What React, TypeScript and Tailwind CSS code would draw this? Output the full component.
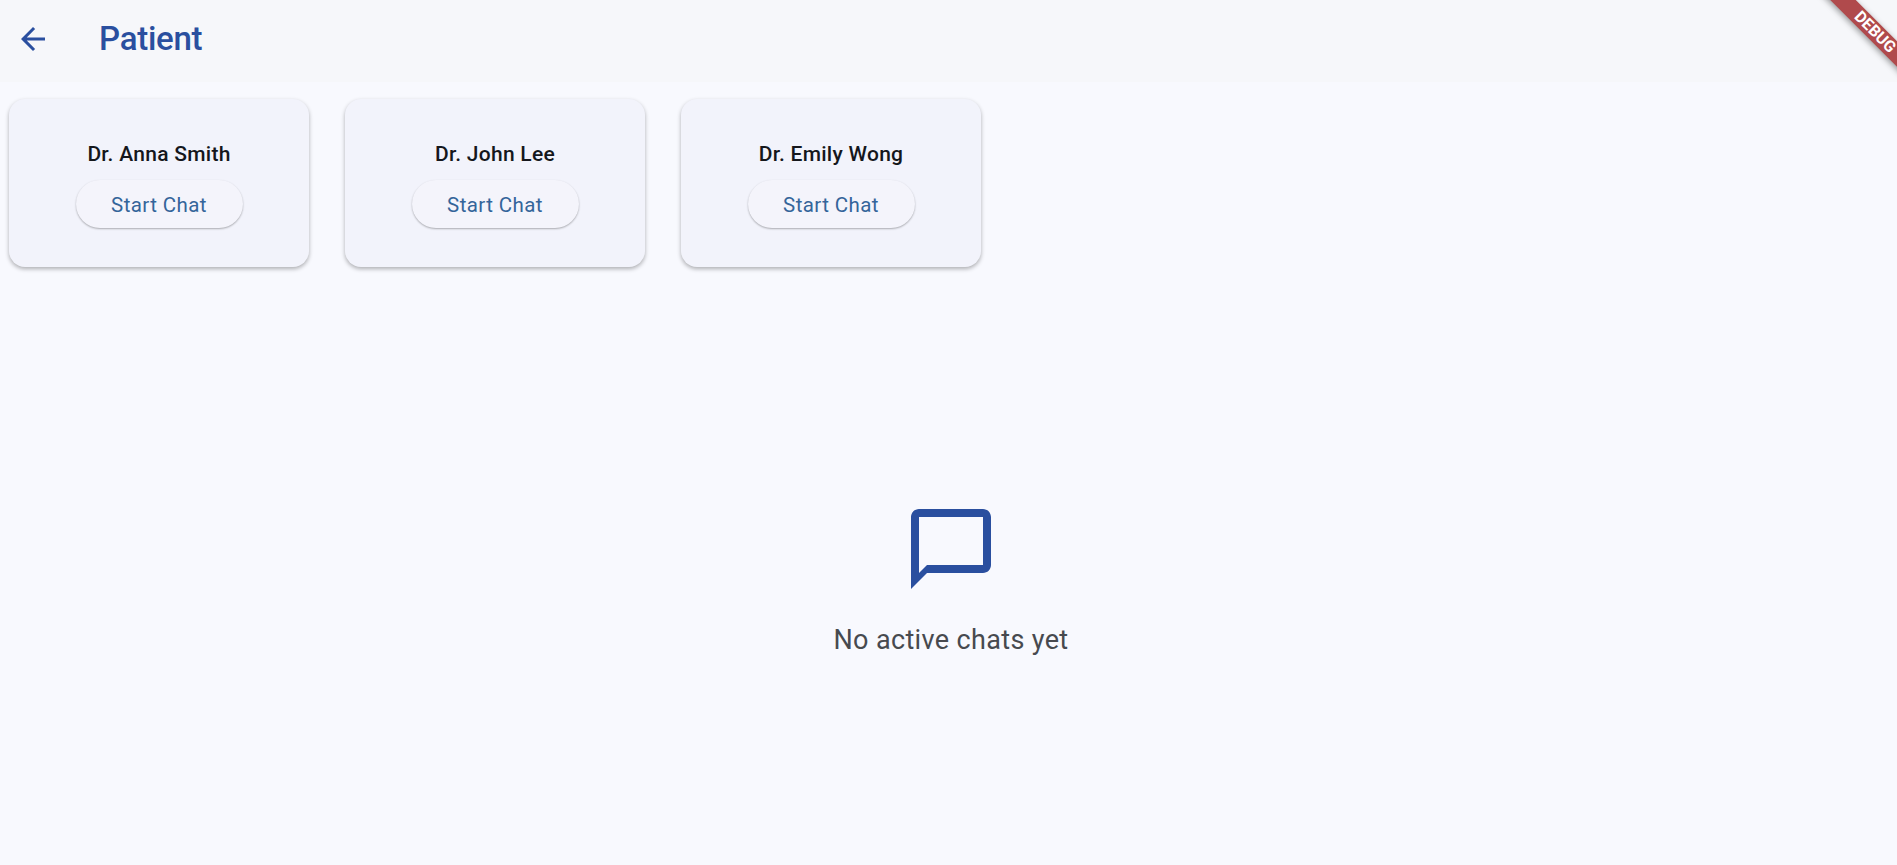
const doctors = ["Dr. Anna Smith", "Dr. John Lee", "Dr. Emily Wong"];

export default function App() {
  return (
    <div className="relative flex h-[865px] w-[1897px] flex-col overflow-hidden bg-[#f8f9fe] font-['Roboto',sans-serif]">
      <header className="flex h-[82px] shrink-0 items-center bg-[#f6f7fa] pl-[15px]">
        <svg viewBox="0 0 24 24" className="mt-[-5px] h-[36px] w-[36px] fill-[#2a4f9f]">
          <path d="M20 11H7.83l5.59-5.59L12 4l-8 8 8 8 1.41-1.41L7.83 13H20v-2z" />
        </svg>
        <h1 className="ml-[48px] mt-[-5px] text-[33px] font-medium leading-none tracking-[-0.25px] text-[#2a4f9f]">Patient</h1>
      </header>
      <div className="flex gap-[36px] pl-[9px] pt-[17px]">
        {doctors.map((name) => (
          <div key={name} className="flex h-[168px] w-[300px] flex-col items-center rounded-[16px] bg-[#f2f3fb] pt-[43px] shadow-[0_2px_4px_rgba(0,0,0,0.3)]">
            <div className="text-[21px] font-medium leading-[24px] tracking-[0.27px] text-[#15171c]">{name}</div>
            <button className="mt-[14px] h-[48px] w-[167px] rounded-full bg-[#f4f4fb] pt-[1px] text-[20.5px] leading-[24px] tracking-[0.4px] text-[#34659a] shadow-[0_1px_2px_rgba(0,0,0,0.3)]">
              Start Chat
            </button>
          </div>
        ))}
      </div>
      <div className="flex flex-col items-center pl-[5px] pt-[234px]">
        <svg viewBox="0 0 24 24" className="h-[96px] w-[96px] fill-[#2a4f9f]">
          <path d="M20 2H4c-1.1 0-2 .9-2 2v18l4-4h14c1.1 0 2-.9 2-2V4c0-1.1-.9-2-2-2zm0 14H6l-2 2V4h16v12z" />
        </svg>
        <p className="mt-[27px] text-[27px] leading-[32px] tracking-[0.35px] text-[#474a4f]">No active chats yet</p>
      </div>
      <div className="absolute right-[-53px] top-[23px] w-[150px] rotate-45 bg-[#b04a4c] text-center text-[16px] font-bold leading-[18px] text-white shadow-[0_2px_6px_rgba(0,0,0,0.4)]">
        DEBUG
      </div>
    </div>
  );
}
